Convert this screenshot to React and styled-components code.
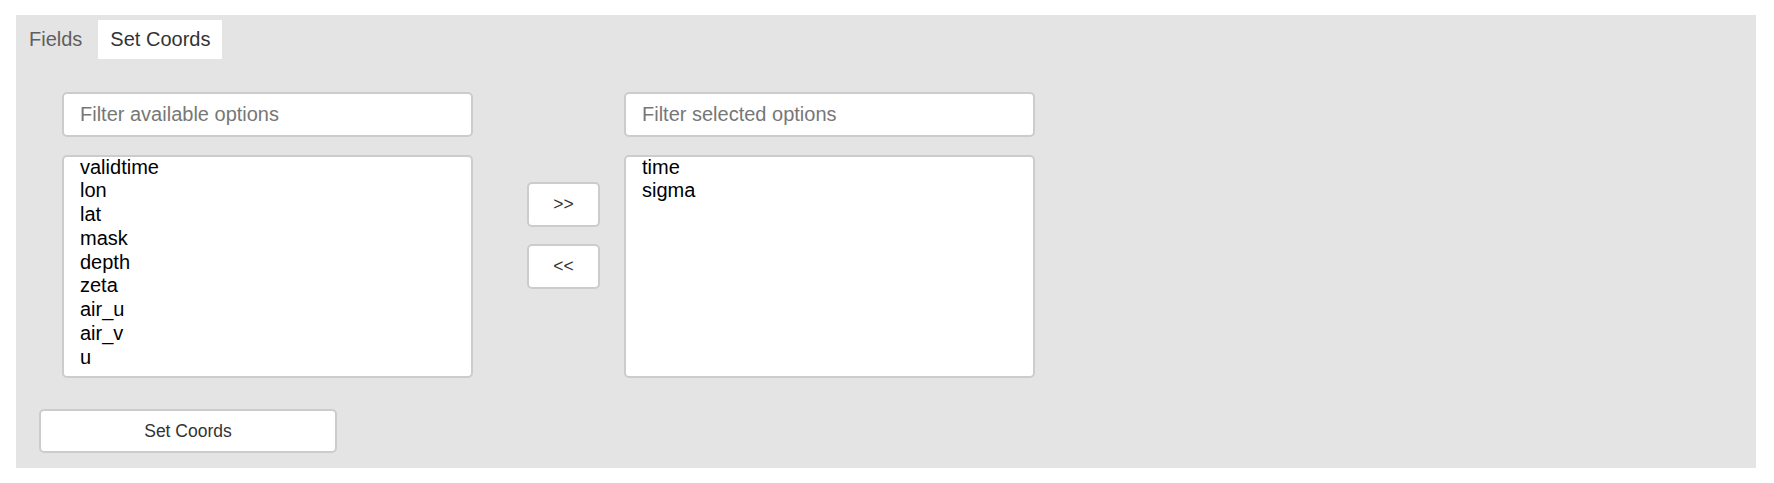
import React, { useState } from "react";
import styled, { createGlobalStyle } from "styled-components";

const GlobalStyle = createGlobalStyle`
  body {
    margin: 0;
    background: #ffffff;
    font-family: "Liberation Sans", Arial, sans-serif;
  }
`;

const Page = styled.div`
  padding: 15px 18px 0 16px;
`;

const Panel = styled.div`
  background: #e4e4e4;
  padding: 5px 0 15px 0;
`;

const TabBar = styled.div`
  display: flex;
  gap: 4px;
  padding-left: 1px;
`;

const Tab = styled.div`
  height: 39px;
  line-height: 39px;
  padding: 0 12px;
  font-size: 20px;
  color: ${(p) => (p.active ? "#333333" : "#5f5f5f")};
  background: ${(p) => (p.active ? "#ffffff" : "transparent")};
  cursor: pointer;
`;

const TransferRow = styled.div`
  display: flex;
  align-items: flex-start;
  margin: 33px 0 0 46px;
`;

const Column = styled.div`
  width: 411px;
  display: flex;
  flex-direction: column;
  gap: 18px;
`;

const FilterInput = styled.input`
  box-sizing: border-box;
  width: 100%;
  height: 45px;
  border: 2px solid #cccccc;
  border-radius: 5px;
  padding: 0 16px;
  font-family: "Liberation Sans", Arial, sans-serif;
  font-size: 20px;
  color: #333333;
  background: #ffffff;
  outline: none;

  &::placeholder {
    color: #777777;
  }
`;

const OptionList = styled.div`
  box-sizing: border-box;
  height: 223px;
  border: 2px solid #cccccc;
  border-radius: 5px;
  background: #ffffff;
  overflow: hidden;
`;

const Options = styled.ul`
  list-style: none;
  margin: -1.5px 0 0 0;
  padding: 0;
`;

const Option = styled.li`
  padding-left: 16px;
  font-size: 20px;
  line-height: 23.8px;
  color: #000000;
`;

const MoveButtons = styled.div`
  display: flex;
  flex-direction: column;
  gap: 17px;
  margin: 90px 24px 0 54px;
`;

const Button = styled.button`
  box-sizing: border-box;
  width: ${(p) => p.width}px;
  height: ${(p) => p.height}px;
  border: 2px solid #cccccc;
  border-radius: 5px;
  background: #ffffff;
  font-family: "Liberation Sans", Arial, sans-serif;
  font-size: 17.5px;
  color: #333333;
  padding: 0;
  cursor: pointer;
`;

const Footer = styled.div`
  margin: 31px 0 0 23px;
`;

const available = [
  "validtime",
  "lon",
  "lat",
  "mask",
  "depth",
  "zeta",
  "air_u",
  "air_v",
  "u",
];
const selected = ["time", "sigma"];

const ListBox = ({ placeholder, items }) => (
  <Column>
    <FilterInput placeholder={placeholder} />
    <OptionList>
      <Options>
        {items.map((item) => (
          <Option key={item}>{item}</Option>
        ))}
      </Options>
    </OptionList>
  </Column>
);

const App = () => {
  const [tab, setTab] = useState("coords");

  return (
    <Page>
      <GlobalStyle />
      <Panel>
        <TabBar>
          <Tab active={tab === "fields"} onClick={() => setTab("fields")}>
            Fields
          </Tab>
          <Tab active={tab === "coords"} onClick={() => setTab("coords")}>
            Set Coords
          </Tab>
        </TabBar>
        <TransferRow>
          <ListBox placeholder="Filter available options" items={available} />
          <MoveButtons>
            <Button width={73} height={45}>&gt;&gt;</Button>
            <Button width={73} height={45}>&lt;&lt;</Button>
          </MoveButtons>
          <ListBox placeholder="Filter selected options" items={selected} />
        </TransferRow>
        <Footer>
          <Button width={298} height={44}>Set Coords</Button>
        </Footer>
      </Panel>
    </Page>
  );
};

export default App;
